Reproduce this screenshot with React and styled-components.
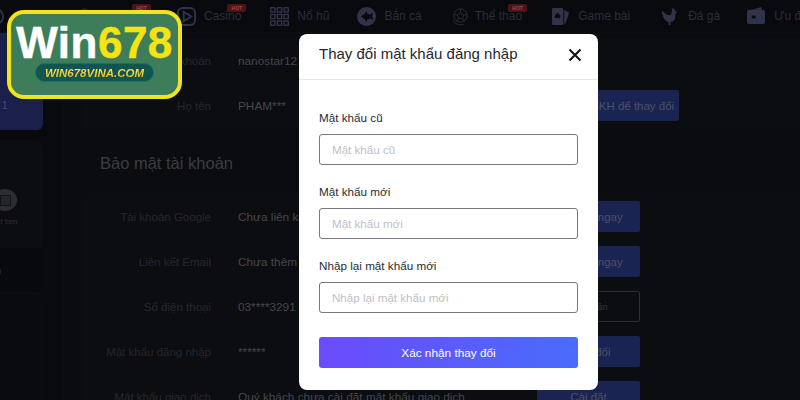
import React from "react";
import styled, { createGlobalStyle } from "styled-components";

const Global = createGlobalStyle`
  html, body { margin: 0; padding: 0; background: #090a0e; }
  * { box-sizing: border-box; }
`;
const Page = styled.div`
  position: relative; width: 800px; height: 400px; overflow: hidden;
  background: #090a0e; font-family: "Liberation Sans", Arial, sans-serif;
`;
const Nav = styled.nav`
  height: 33px; display: flex; align-items: center; border-bottom: 1px solid #0d0e12;
`;
const NavItem = styled.div`
  position: relative; display: flex; align-items: center; gap: ${p => p.$gap ?? 8}px; flex: none;
  width: ${p => (p.$w ? `${p.$w}px` : "auto")};
  margin-left: ${p => p.$ml}px; color: #2b2d37; font-size: 12px; white-space: nowrap;
  svg { flex: none; width: 19px; height: 19px; }
`;
const Hot = styled.span`
  position: absolute; top: -3px; right: -5px; width: 19px; height: 8px; border-radius: 2px;
  background: #4f1315; color: #9c4a4a; font-size: 5px; font-weight: 700; line-height: 8px; text-align: center;
`;
const Body = styled.div`display: flex; height: 367px;`;
const Sidebar = styled.aside`
  width: 62px; flex: none; display: flex; flex-direction: column;
`;
const BlueCard = styled.div`
  width: 43px; height: 97px; background: #1a2049; border-radius: 0 6px 6px 0;
  color: #4a4f70; font-size: 10px; display: flex; align-items: flex-end; padding: 0 0 19px 2px;
`;
const SideCard = styled.div`
  width: 42px; height: 108px; margin-top: 10px; background: #0c0d11; border-radius: 0 6px 6px 0;
  display: flex; flex-direction: column; align-items: flex-start; padding-top: 49px; overflow: hidden;
`;
const RoundIcon = styled.div`
  width: 24px; height: 22px; margin-left: -7px; border-radius: 50%; background: #2c2d33;
  display: flex; align-items: center; justify-content: center;
  &::after { content: ""; width: 9px; height: 9px; border: 1px solid #121318; background: #24252b; }
`;
const SideCaption = styled.span`
  margin: 6px 0 0 -10px; color: #2b2d33; font-size: 8px; white-space: nowrap;
`;
const SideActive = styled.div`
  width: 42px; height: 44px; color: #35373d; font-size: 11px; background: #08090c;
  display: flex; align-items: center; text-indent: -5px;
`;
const SideList = styled.div`
  width: 42px; flex: 1; background: #0a0b0e; border-top: 1px solid #0d0e12; border-radius: 0 6px 0 0;
`;
const Main = styled.main`
  flex: 1; background: #0b0c10; padding: 5px 0 0 21px; min-width: 0;
`;
const Section = styled.section`
  display: flex; flex-direction: column; padding-left: 17px; background: #0c0d11;
`;
const Row = styled.div`
  height: 45px; display: flex; align-items: center; flex: none;
`;
const Label = styled.span`
  width: 111px; text-align: right; color: #25272c; font-size: 11.5px; white-space: nowrap; flex: none; margin-right: 27px;
`;
const Value = styled.span`
  width: 299px; flex: none; color: #45474d; font-size: 11.8px; white-space: nowrap; overflow: hidden;
`;
const Heading = styled.h2`
  margin: 0; height: 66px; padding: 25px 0 0 17px;
  color: #3a3c42; font-size: 16.5px; font-weight: 400; line-height: 20px;
`;
const Action = styled.div`
  width: ${p => p.$w || 103}px; height: 31px; flex: none; border-radius: 2px;
  background: ${p => p.$outline ? "transparent" : "#1a2452"};
  border: ${p => p.$outline ? "1px solid #2c2e34" : "none"};
  color: ${p => p.$outline ? "#33353b" : "#4c5066"};
  font-size: ${p => p.$outline ? 9 : 11.5}px;
  display: flex; align-items: center; justify-content: center; white-space: nowrap;
`;
const Logo = styled.div`
  position: absolute; left: 7px; top: 10px; width: 175px; height: 89px;
  background: #3e7d5a; border: 4px solid #f2e41c; border-radius: 17px;
  display: flex; flex-direction: column; align-items: center;
`;
const LogoTitle = styled.div`
  margin-top: 12px; font-size: 44px; line-height: 34px; font-weight: 700; letter-spacing: 0.5px; color: #fff; white-space: nowrap;
  -webkit-text-stroke: 0.5px currentColor;
  span { color: #f6e312; }
`;
const LogoPill = styled.div`
  margin-top: 3px; width: 119px; height: 19px; border-radius: 10px; background: #10564f; border: 1px solid #1d7064;
  display: flex; align-items: center; justify-content: center;
  span {
    font-weight: 700; font-style: italic; font-size: 11.5px;
    background: linear-gradient(180deg, #fff27a, #eeb10f); -webkit-background-clip: text; background-clip: text; color: transparent;
    white-space: nowrap;
  }
`;
const Modal = styled.div`
  position: absolute; left: 299px; top: 34px; width: 299px; height: 356px; background: #fff; border-radius: 8px;
`;
const ModalHead = styled.header`
  height: 46px; display: flex; align-items: center; justify-content: space-between;
  padding: 0 16px 4px 20px; border-bottom: 1px solid #e6e6e8;
  svg { display: block; }
`;
const ModalTitle = styled.span`
  margin-top: -2px; color: #26272c; font-size: 15px;
`;
const Form = styled.form`
  padding: 30px 20px 0; display: flex; flex-direction: column; margin: 0;
`;
const Field = styled.label`
  display: flex; flex-direction: column; gap: 8px; margin-bottom: 19px;
`;
const FieldLabel = styled.span`
  color: #2a2c33; font-size: 11.7px; line-height: 16px;
`;
const Input = styled.input`
  width: 259px; height: 31px; border: 1px solid #777880; border-radius: 3px; padding: 0 12px; background: #fff;
  font: 11.6px "Liberation Sans", Arial, sans-serif; outline: none;
  &::placeholder { color: #bfc0c6; opacity: 1; }
`;
const Submit = styled.button`
  width: 259px; height: 31px; margin-top: 5px; border: 0; border-radius: 3px; color: #fff; font: 11.8px "Liberation Sans", Arial, sans-serif;
  background: linear-gradient(90deg, #6b4bfb, #4a6cfb);
`;

const c = "#30334a";
const d = "#0a0b0e";
const I = {
  round: <svg viewBox="0 0 20 20"><circle cx="10" cy="10" r="8" fill="none" stroke={c} strokeWidth="2"/></svg>,
  casino: <svg viewBox="0 0 20 20"><rect x="1" y="1" width="18" height="18" rx="5" fill="none" stroke={c} strokeWidth="2"/><path d="M7 5l8 5-8 5z" fill="none" stroke={c} strokeWidth="2"/></svg>,
  slot: <svg viewBox="0 0 20 20" fill={c}>{[0,1,2].map(y=>[0,1,2].map(x=><g key={x+"-"+y}><rect x={x*7} y={y*7} width="6" height="6" rx="1"/><rect x={x*7+1.5} y={y*7+1.500} width="3" height="3" fill={d}/></g>))}</svg>,
  fish: <svg viewBox="0 0 20 20"><circle cx="10" cy="10" r="10" fill={c}/><path d="M4 10l4-3 2-3 1 3 3 1 3-2-1 4 1 4-3-2-3 1-1 3-2-3z" fill={d}/></svg>,
  ball: <svg viewBox="0 0 20 20" fill="none" stroke="#2a2c3a"><circle cx="10" cy="9" r="7"/><path d="M10 6l3.500 2.500-1.500 3.500H8L6.500 8.500zM10 6V2M13.500 8.500L17 8M12 12l2 3M8 12l-2 3M6.500 8.500L3 8"/><path d="M2 14c2 4 8 6 12 4" /></svg>,
  cards: <svg viewBox="0 0 20 20" fill={c}><rect x="1" y="1" width="12" height="18" rx="1.500"/><path d="M14 3l5 3-4 12-1 .5z"/><path d="M7 6c2 2 3 3 3 4.500 0 1.500-2 2-3 .5-1 1.500-3 1-3-.5C4 9 5 8 7 6z" fill={d}/></svg>,
  rooster: <svg viewBox="0 0 20 20" fill={c}><path d="M12 1l2 1 1 2 2 2-2 1v3c0 4-3 6-5 6v3H8v-3C4 15 1 10 1 4c2 1 3 3 5 4 2 1 4 1 5-1z"/></svg>,
  wallet: <svg viewBox="0 0 20 20" fill={c}><path d="M5 3l10-3 1 3z"/><rect x="0" y="3" width="19" height="15" rx="3"/><rect x="5" y="9" width="4" height="3" fill={d}/></svg>,
};

const Close = () => (
  <svg width="14" height="14" viewBox="0 0 14 14"><path d="M1.500 1.500l11 11M12.500 1.500l-11 11" stroke="#111" strokeWidth="2"/></svg>
);

const securityRows = [
  ["Tài khoản Google", "Chưa liên kết", "Liên kết ngay"],
  ["Liên kết Email", "Chưa thêm", "Liên kết ngay"],
  ["Số điện thoại", "03****3291", "Xác nhận", true],
  ["Mật khẩu đăng nhập", "******", "Thay đổi"],
  ["Mật khẩu giao dịch", "Quý khách chưa cài đặt mật khẩu giao dịch", "Cài đặt"],
];

export default function App() {
  return (
    <Page>
      <Global />
      <Nav>
        <NavItem $ml={-14} $w={19}>{I.round}</NavItem>
        <NavItem $ml={70} $w={71}>{I.ball}<Hot>HOT</Hot></NavItem>
        <NavItem $ml={31}>{I.casino}Casino<Hot>HOT</Hot></NavItem>
        <NavItem $ml={29}>{I.slot}Nổ hũ</NavItem>
        <NavItem $ml={28}>{I.fish}Bắn cá</NavItem>
        <NavItem $ml={29} $gap={5}>{I.ball}Thể thao<Hot>HOT</Hot></NavItem>
        <NavItem $ml={29}>{I.cards}Game bài</NavItem>
        <NavItem $ml={31}>{I.rooster}Đá gà</NavItem>
        <NavItem $ml={27}>{I.wallet}Ưu đãi</NavItem>
      </Nav>
      <Body>
        <Sidebar>
          <BlueCard>1</BlueCard>
          <SideCard><RoundIcon /><SideCaption>Đặt tiền</SideCaption></SideCard>
          <SideActive>h</SideActive>
          <SideList />
        </Sidebar>
        <Main>
          <Section>
            <Row><Label>Tên tài khoản</Label><Value>nanostar12</Value></Row>
            <Row><Label>Họ tên</Label><Value>PHAM***</Value><Action $w={142}>Liên hệ CSKH để thay đổi</Action></Row>
          </Section>
          <Heading>Bảo mật tài khoản</Heading>
          <Section>
            {securityRows.map(([l, v, a, o]) => (
              <Row key={l}><Label>{l}</Label><Value>{v}</Value><Action $outline={o}>{a}</Action></Row>
            ))}
          </Section>
        </Main>
      </Body>
      <Logo>
        <LogoTitle>Win<span>678</span></LogoTitle>
        <LogoPill><span>WIN678VINA.COM</span></LogoPill>
      </Logo>
      <Modal>
        <ModalHead><ModalTitle>Thay đổi mật khẩu đăng nhập</ModalTitle><Close /></ModalHead>
        <Form>
          <Field><FieldLabel>Mật khẩu cũ</FieldLabel><Input placeholder="Mật khẩu cũ" /></Field>
          <Field><FieldLabel>Mật khẩu mới</FieldLabel><Input placeholder="Mật khẩu mới" /></Field>
          <Field><FieldLabel>Nhập lại mật khẩu mới</FieldLabel><Input placeholder="Nhập lại mật khẩu mới" /></Field>
          <Submit type="button">Xác nhận thay đổi</Submit>
        </Form>
      </Modal>
    </Page>
  );
}
